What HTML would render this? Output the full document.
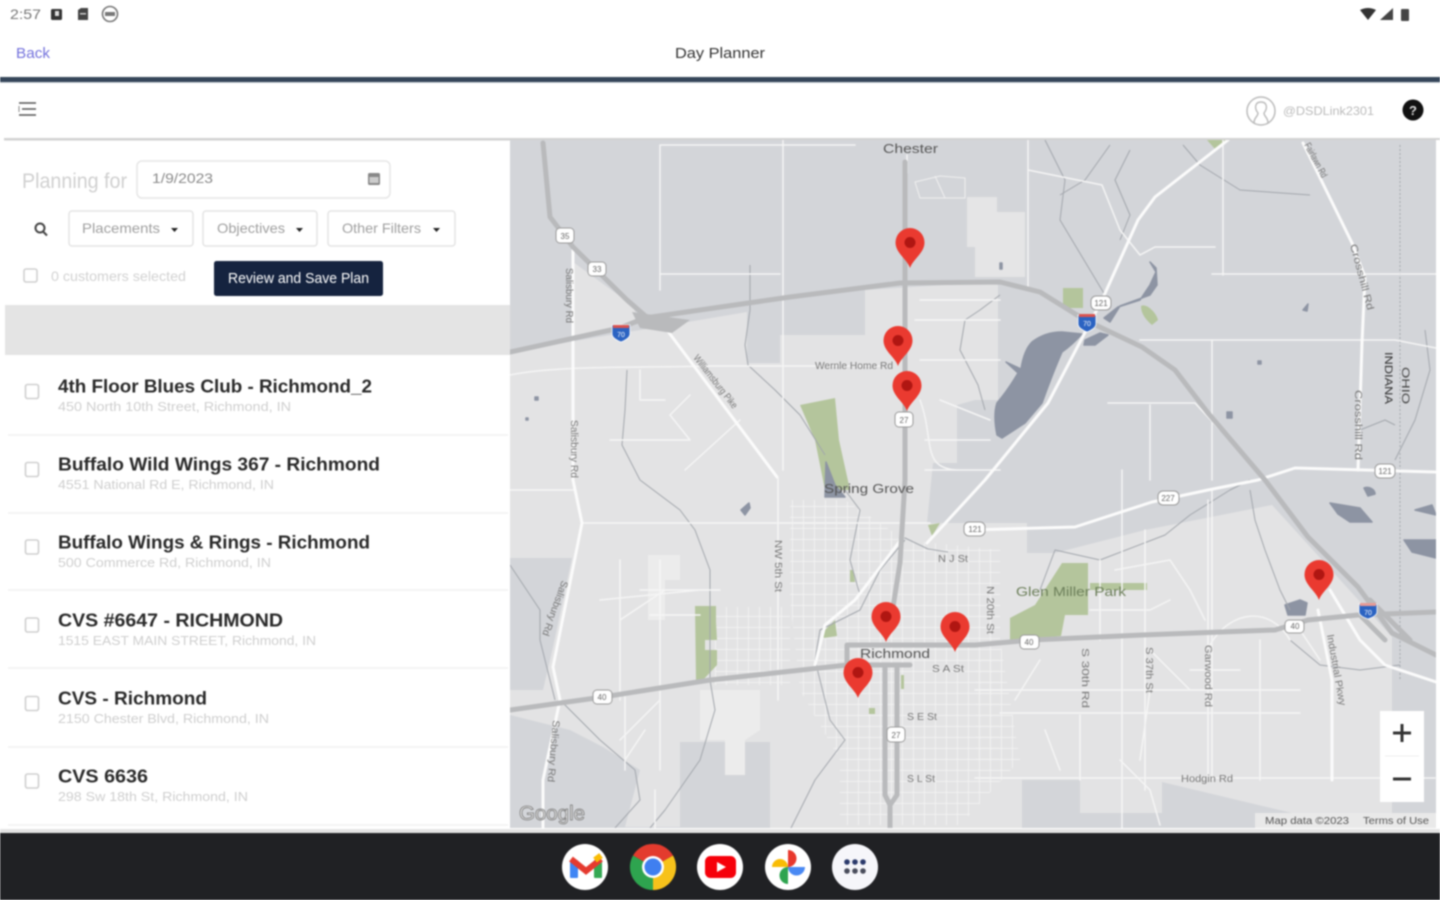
<!DOCTYPE html>
<html lang="en"><head><meta charset="utf-8"><title>Day Planner</title>
<style>
html,body{margin:0;padding:0;background:#fff;width:1440px;height:900px;overflow:hidden}
svg{display:block;position:absolute;left:0;top:0;filter:blur(.7px)}
text{font-family:"Liberation Sans",sans-serif}
.w{fill:none;stroke:#f5f5f5;stroke-width:1.5;stroke-linejoin:round;stroke-linecap:round}
.W{fill:none;stroke:#fbfbfb;stroke-width:3;stroke-linejoin:round;stroke-linecap:round}
.t{fill:none;stroke:#f0f0f0;stroke-width:1;stroke-linejoin:round}
.h{fill:none;stroke:#b9babc;stroke-width:5;stroke-linejoin:round;stroke-linecap:round}
.r{fill:none;stroke:#a2a6ac;stroke-width:1;stroke-linejoin:round}
.l{font-size:10px;fill:#777}
.n{font-size:18px;font-weight:bold;fill:#2a2a2a}
.a{font-size:13px;fill:#cfcfcf}
.f{font-size:14px;fill:#a0a0a0}
.sh{fill:#fff;stroke:#999;stroke-width:1}
.st{font-size:8px;fill:#666;text-anchor:middle}
</style></head><body>
<svg width="1440" height="900" viewBox="0 0 1440 900" xmlns="http://www.w3.org/2000/svg">
<defs>
<clipPath id="mc"><rect x="510" y="140" width="926" height="688"/></clipPath>
<pattern id="g" width="11" height="11" patternUnits="userSpaceOnUse"><path d="M0 0H11M0 0V11" stroke="#f5f5f5" stroke-width="1.5" fill="none"/></pattern>
<g id="pin"><path d="M0 0C-3-9-14.500-15-14.500-25.500A14.500 14.500 0 0 1 14.500-25.500C14.500-15 3-9 0 0Z" fill="#ea3a30"/><circle cy="-25.500" r="5.500" fill="#b01612"/></g>
</defs>
<rect width="1440" height="900" fill="#fff"/>

<!-- status bar -->
<text x="10" y="19" font-size="14" fill="#777" textLength="31" lengthAdjust="spacingAndGlyphs">2:57</text>
<rect x="51" y="9" width="11" height="11" rx="1.500" fill="#333"/><rect x="55" y="11" width="4" height="5" fill="#ddd"/>
<path d="M78 10l3-2h7v12H78Z" fill="#444"/><rect x="80" y="13" width="6" height="1.500" fill="#ccc"/>
<circle cx="110" cy="14" r="7.500" fill="none" stroke="#777" stroke-width="1.600"/><rect x="105" y="12" width="10" height="4" fill="#777"/>
<path d="M1360 10Q1368 6 1376 10L1368 20Z" fill="#333"/><path d="M1380 20L1393 8V20Z" fill="#444"/><rect x="1401" y="9" width="8" height="12" rx="1" fill="#444"/>

<!-- app title -->
<text x="16" y="58" font-size="15" fill="#7472dc" textLength="34" lengthAdjust="spacingAndGlyphs">Back</text>
<text x="675" y="58" font-size="15" fill="#333" textLength="90" lengthAdjust="spacingAndGlyphs">Day Planner</text>
<rect x="0" y="77" width="1440" height="5" fill="#35465a"/>
<rect x="0" y="82" width="1440" height="1" fill="#c8ced4"/>

<!-- nav -->
<path d="M19 103H36M22 109H36M19 115H36" stroke="#555" stroke-width="1.600" fill="none"/>
<path d="M19 106V112" stroke="#888" stroke-width="1"/>
<circle cx="1261" cy="111" r="14" fill="none" stroke="#bbb" stroke-width="1.500"/>
<path d="M1254 123C1254 117 1258 117 1258 113C1254 108 1255 102 1261 102C1267 102 1268 108 1264 113C1264 117 1268 117 1268 123" fill="none" stroke="#bbb" stroke-width="1.400"/>
<text x="1283" y="115" font-size="12" fill="#bbb" textLength="91" lengthAdjust="spacingAndGlyphs">@DSDLink2301</text>
<circle cx="1413" cy="110" r="10.500" fill="#111"/><text x="1413" y="115" font-size="13" font-weight="bold" fill="#ddd" text-anchor="middle">?</text>
<rect x="4" y="138" width="1436" height="2.500" fill="#d2d2d2"/>

<!-- sidebar top -->
<text x="22" y="188" font-size="21" fill="#d0d0d0" textLength="105" lengthAdjust="spacingAndGlyphs">Planning for</text>
<rect x="137" y="161" width="253" height="37" rx="5" fill="#fff" stroke="#e6e6e6" stroke-width="1.500"/>
<text x="152" y="183" font-size="14" fill="#8a8a8a" textLength="61" lengthAdjust="spacingAndGlyphs">1/9/2023</text>
<rect x="368" y="173" width="12" height="12" rx="1.500" fill="#888"/><rect x="369.500" y="177" width="9" height="6" fill="#ccc"/>
<circle cx="40" cy="228" r="4.500" fill="none" stroke="#444" stroke-width="2"/><path d="M43.500 232L47 235.500" stroke="#444" stroke-width="2"/>
<g fill="#fff" stroke="#e4e4e4" stroke-width="1.500">
<rect x="69" y="211" width="124" height="35" rx="3"/><rect x="203" y="211" width="114" height="35" rx="3"/><rect x="328" y="211" width="127" height="35" rx="3"/>
</g>
<text class="f" x="82" y="233" textLength="78" lengthAdjust="spacingAndGlyphs">Placements</text>
<text class="f" x="217" y="233" textLength="68" lengthAdjust="spacingAndGlyphs">Objectives</text>
<text class="f" x="342" y="233" textLength="79" lengthAdjust="spacingAndGlyphs">Other Filters</text>
<g fill="#222"><path d="M171 228h7l-3.500 4Z"/><path d="M296 228h7l-3.500 4Z"/><path d="M433 228h7l-3.500 4Z"/></g>
<rect x="24" y="269" width="13" height="13" rx="2" fill="#fff" stroke="#d0d0d0" stroke-width="1.600"/>
<text x="51" y="281" font-size="14" fill="#d2d2d2" textLength="135" lengthAdjust="spacingAndGlyphs">0 customers selected</text>
<rect x="214" y="261" width="169" height="35" rx="2.500" fill="#15233f"/>
<text x="228" y="283" font-size="15" fill="#fff" textLength="141" lengthAdjust="spacingAndGlyphs">Review and Save Plan</text>
<rect x="5" y="305" width="505" height="50" fill="#e4e4e4"/>

<!-- list -->
<g fill="#fff" stroke="#cfcfcf" stroke-width="1.600">
<rect x="25.500" y="384.500" width="13" height="14" rx="2"/><rect x="25.500" y="462.500" width="13" height="14" rx="2"/><rect x="25.500" y="540" width="13" height="14" rx="2"/><rect x="25.500" y="618" width="13" height="14" rx="2"/><rect x="25.500" y="696.500" width="13" height="14" rx="2"/><rect x="25.500" y="774" width="13" height="14" rx="2"/>
</g>
<text class="n" x="58" y="392.500" textLength="314" lengthAdjust="spacingAndGlyphs">4th Floor Blues Club - Richmond_2</text>
<text class="a" x="58" y="411" textLength="233" lengthAdjust="spacingAndGlyphs">450 North 10th Street, Richmond, IN</text>
<text class="n" x="58" y="470.500" textLength="322" lengthAdjust="spacingAndGlyphs">Buffalo Wild Wings 367 - Richmond</text>
<text class="a" x="58" y="489" textLength="216" lengthAdjust="spacingAndGlyphs">4551 National Rd E, Richmond, IN</text>
<text class="n" x="58" y="548.500" textLength="312" lengthAdjust="spacingAndGlyphs">Buffalo Wings &amp; Rings - Richmond</text>
<text class="a" x="58" y="567" textLength="213" lengthAdjust="spacingAndGlyphs">500 Commerce Rd, Richmond, IN</text>
<text class="n" x="58" y="626.500" textLength="225" lengthAdjust="spacingAndGlyphs">CVS #6647 - RICHMOND</text>
<text class="a" x="58" y="645" textLength="258" lengthAdjust="spacingAndGlyphs">1515 EAST MAIN STREET, Richmond, IN</text>
<text class="n" x="58" y="704.500" textLength="149" lengthAdjust="spacingAndGlyphs">CVS - Richmond</text>
<text class="a" x="58" y="723" textLength="211" lengthAdjust="spacingAndGlyphs">2150 Chester Blvd, Richmond, IN</text>
<text class="n" x="58" y="782.500" textLength="90" lengthAdjust="spacingAndGlyphs">CVS 6636</text>
<text class="a" x="58" y="801" textLength="190" lengthAdjust="spacingAndGlyphs">298 Sw 18th St, Richmond, IN</text>
<path d="M8 435H508M8 513H508M8 590H508M8 668H508M8 747H508M8 825H508" stroke="#f1f1f1" stroke-width="1.500"/>

<!-- MAP -->
<g clip-path="url(#mc)">
<rect x="510" y="140" width="926" height="688" fill="#d3d5d9"/>
<!-- urban land -->
<path d="M510 352L747 312V363H780V335H865V290L975 283H998V400H975L957 405V463H933L927 523H1027V553H1055L1145 530L1272 505L1392 637V813H1292L1162 782V813H1080V780H1022V828H770V742H680V827H625L640 770L603 747L570 730L510 715V690H543L553 647L572 558H510Z" fill="#e3e3e4"/>
<path d="M573 262L632 305L640 322L573 336Z" fill="#e3e3e4"/>
<path d="M967 197H997V212H1025V277H975V247H967Z" fill="#e5e5e6"/>
<!-- lighter blocks -->
<path d="M648 555H680V580H665V620H648Z" fill="#ececec"/>
<path d="M700 690H760V730L745 740V775H725V740H700Z" fill="#ececec"/>
<!-- city grid -->
<path d="M845 500L905 540L1000 550V640L1020 760L960 825H840L840 760L800 690L790 600V500Z" fill="url(#g)"/>
<path d="M715 607H790V685H715Z" fill="url(#g)"/>
<path d="M975 660H1000V760H975Z" fill="url(#g)"/>
<!-- parks -->
<g fill="#b4c59c">
<path d="M800 405L835 398L839 440L850 490H825L815 440Z"/>
<path d="M695 606H716V622L717 640H705V650H717V665L703 680H696Z"/>
<path d="M1010 640V618L1035 605L1062 563H1088V615H1065L1061 636L1015 640Z"/>
<path d="M1090 583H1147V590H1090Z"/>
<rect x="1063" y="288" width="20" height="20"/>
<path d="M1141 306C1146 303 1156 312 1158 320L1152 325C1146 320 1141 314 1141 306Z"/>
<path d="M822 633L835 620L837 636L824 638Z"/>
<path d="M850 570L853 570L855 582L850 582Z"/>
<path d="M928 525L940 523L932 536Z"/>
<rect x="901" y="675" width="3" height="14"/>
<rect x="869" y="708" width="6" height="6"/>
<path d="M1207 140L1228 140L1215 149Z"/>
</g>
<!-- water -->
<g fill="#8d94a3" stroke="#8d94a3" stroke-width="1.500" stroke-linejoin="round">
<path d="M997 435Q993 415 997 403Q1008 390 1018 373L1006 362L1021 369Q1024 350 1032 342Q1045 332 1062 332L1082 334Q1072 345 1062 352Q1052 375 1042 403L1025 423L1002 438Z"/>
<path d="M1085 340L1100 333L1108 335L1095 345L1084 345Z"/>
<path d="M1104 318L1118 307L1140 300L1150 285L1156 272L1150 262L1156 268L1157 285L1150 295L1120 306L1110 322Z"/>
<path d="M1285 605L1300 600L1307 603L1305 615H1288Z"/>
<path d="M1330 503L1360 508L1372 522L1350 522L1338 514Z"/>
<path d="M1404 540H1436V558L1412 552Z"/>
<path d="M1364 488C1370 486 1375 490 1375 494L1368 496Z"/>
<path d="M1415 510L1432 505L1436 515Z"/>
<path d="M826 462L835 485L845 497L825 497Z"/>
<path d="M741 510L749 503L750 508L745 515Z"/>
<path d="M1303 310L1308 304L1307 311Z"/>
<rect x="1227" y="412" width="5" height="6"/><rect x="1000" y="263" width="2" height="6"/>
<rect x="1258" y="361" width="3" height="3"/><rect x="535" y="397" width="3" height="3"/><rect x="526" y="418" width="2" height="2"/>
</g>
<!-- rivers -->
<g>
<path class="r" d="M1000 295L980 310L965 320L960 350L978 385L985 410"/>
<path class="r" d="M750 265L750 310L745 345L748 365L775 390L800 415L825 455"/>
<path class="r" d="M627 370L625 410L622 445L640 480"/>
<path class="r" d="M640 480L680 510L695 530L710 570V680L715 710L700 760L665 810L650 828"/>
<path class="r" d="M510 565L540 610L540 640L555 700"/>
<path class="r" d="M560 700L600 740L635 770L640 800L615 828"/>
<path class="r" d="M1045 140L1065 180L1060 220L1090 270L1105 295"/>
<path class="r" d="M1110 145L1085 180L1060 195"/>
<path class="r" d="M1130 150L1115 180L1130 215L1120 240"/>
<path class="r" d="M1183 145L1200 165L1240 190L1310 195"/>
<path class="r" d="M1250 480L1230 490L1190 515L1165 535L1100 560L1055 550L1040 590"/>
<path class="r" d="M903 537L928 549L948 552"/>
<path class="r" d="M905 540L880 570L860 610L820 630L815 660L830 720L845 740L815 780L790 830"/>
<path class="r" d="M1250 490L1255 520L1265 550L1280 590L1290 610"/>
<path class="r" d="M1290 640L1320 665L1360 670L1400 665"/>
<path class="r" d="M1425 330L1430 370L1415 420L1395 460"/>
<path class="r" d="M1360 430L1385 420L1395 425"/>
<path class="r" d="M845 490L860 510L850 560L860 595"/>
</g>
<path d="M1400 145V680" stroke="#a4a8ae" stroke-width="1" stroke-dasharray="2 2" fill="none"/>
<!-- minor streets -->
<g>
<path class="w" d="M661 145H855M660 145V290M660 274H780M783 140V470M1028 140V290M1028 170L1102 185L1120 230L1140 255L1155 247H1215"/>
<path class="w" d="M1223 275V130M1212 274H1436M1140 340H1395L1436 348M1212 340V480M1108 403H1195L1220 430M1150 405V480M1122 470V830M1212 490V780"/>
<path class="w" d="M510 375C560 365 640 368 710 366H880M640 370V400M640 400H665M690 395L670 415L690 440M690 440L610 440M685 470L740 420"/>
<path class="w" d="M510 490H575M582 523H930M620 560V700M650 615H700M660 560V770M600 600L700 590M640 590H720M625 695V770M645 730L625 760M655 790V830M660 700L620 740M620 620L665 590"/>
<path class="w" d="M920 300H1000M915 320H1000M920 360H1000M940 400L990 420M925 440H990M925 470H1000M920 400C935 440 920 470 960 470"/>
<path class="w" d="M1100 560V640M1145 530V790M1208 500V780M1260 640V780M1000 713H1300M975 778H1435M975 690H1300M1080 715V780M1150 690L1140 760"/>
<path class="w" d="M1090 610H1150L1170 600M1115 570L1170 560L1190 590L1205 620M1150 650L1190 690M1190 670H1240M1210 645C1230 610 1270 605 1290 640M1300 630L1320 660M1040 660L1015 700M1045 730L1060 770M1120 760L1150 790L1160 825"/>
</g>
<!-- major white roads -->
<path class="W" d="M667 330L777 477"/>
<path class="W" stroke-width="2.500" d="M1228 140L1155 197L1138 220L1102 300L1048 403L985 480L927 543"/>
<path class="W" d="M1435 472L1295 468L1258 480L1208 490L1152 502L1075 527L970 530"/>
<path class="W" d="M1303 143L1352 243L1365 277L1362 343L1358 470"/>
<path class="W" stroke-width="2.500" d="M573 247V480L582 523L553 667L560 700L543 780V827"/>
<path class="w" stroke-width="2.200" d="M778 477V700"/>
<path class="W" stroke-width="2.200" d="M1330 590L1360 640L1385 665L1436 682"/>
<path class="W" stroke-width="2" d="M1318 610L1332 680V780"/>
<path class="W" stroke-width="2" d="M903 537L878 570L855 600L825 625L815 665"/>
<path class="w" d="M907 155V173"/>
<path class="t" d="M915 182L940 176L965 178V198L920 198ZM935 176L945 198"/>
<!-- highways -->
<path class="h" stroke-width="4" d="M510 352L620 328L645 318L700 310L790 297L900 283L1000 282L1040 292L1085 320L1142 347L1175 370L1208 413L1265 480L1308 537L1358 587L1392 633L1436 655"/>
<path class="h" stroke-width="3" d="M543 143L550 217L573 247L627 300L650 320"/>
<path d="M632 312L690 320L672 333L640 328Z" fill="#b9babc"/>
<path class="h" stroke-width="3.500" d="M905 162V480L900 563L893 607"/>
<path class="h" stroke-width="3.500" d="M510 710L603 697L710 680L847 665H910"/>
<path class="h" stroke-width="4" d="M847 665V645H975L1032 640L1142 635L1275 630L1308 620L1358 615L1436 612"/>
<path class="h" stroke-width="3" d="M885 665V795L890 805L897 795V665M890 805V828"/>
<path class="h" stroke-width="1.500" d="M1360 615L1385 640M1370 600L1410 640"/>
<!-- shields -->
<g>
<rect class="sh" x="556" y="228" width="18" height="15" rx="4"/><text class="st" x="565" y="239">35</text>
<rect class="sh" x="588" y="262" width="18" height="14" rx="4"/><text class="st" x="597" y="272">33</text>
<rect class="sh" x="1091" y="296" width="20" height="14" rx="5"/><text class="st" x="1101" y="306">121</text>
<rect class="sh" x="1375" y="464" width="20" height="14" rx="5"/><text class="st" x="1385" y="474">121</text>
<rect class="sh" x="1158" y="491" width="21" height="14" rx="5"/><text class="st" x="1168" y="501">227</text>
<rect class="sh" x="964" y="522" width="21" height="14" rx="5"/><text class="st" x="975" y="532">121</text>
<rect class="sh" x="895" y="412" width="18" height="15" rx="4"/><text class="st" x="904" y="423">27</text>
<rect class="sh" x="887" y="727" width="18" height="15" rx="4"/><text class="st" x="896" y="738">27</text>
<rect class="sh" x="593" y="690" width="19" height="14" rx="4"/><text class="st" x="602" y="700">40</text>
<rect class="sh" x="1020" y="635" width="19" height="14" rx="4"/><text class="st" x="1029" y="645">40</text>
<rect class="sh" x="1285" y="620" width="19" height="13" rx="4"/><text class="st" x="1295" y="629">40</text>
</g>
<g>
<path d="M612 325H630V334C630 338 624 341 621 342C618 341 612 338 612 334Z" fill="#2b63c2" stroke="#fff" stroke-width=".8"/><rect x="613" y="325" width="16" height="3" fill="#d9534f"/><text x="621" y="337" font-size="7" fill="#fff" text-anchor="middle">70</text>
<path d="M1078 315H1096V324C1096 328 1090 331 1087 332C1084 331 1078 328 1078 324Z" fill="#2b63c2" stroke="#fff" stroke-width=".8"/><rect x="1079" y="314" width="16" height="3" fill="#d9534f"/><text x="1087" y="326" font-size="7" fill="#fff" text-anchor="middle">70</text>
<path d="M1359 604H1377V612C1377 616 1371 618 1368 619C1365 618 1359 616 1359 612Z" fill="#2b63c2" stroke="#fff" stroke-width=".8"/><rect x="1360" y="603" width="16" height="3" fill="#e79a95"/><text x="1368" y="615" font-size="7" fill="#fff" text-anchor="middle">70</text>
</g>
<!-- labels -->
<text x="883" y="153" font-size="13" fill="#555" textLength="55" lengthAdjust="spacingAndGlyphs">Chester</text>
<text x="824" y="493" font-size="13" fill="#555" textLength="90" lengthAdjust="spacingAndGlyphs">Spring Grove</text>
<text x="860" y="658" font-size="13" fill="#555" textLength="70" lengthAdjust="spacingAndGlyphs">Richmond</text>
<text x="1016" y="596" font-size="13" fill="#6c7f5a" textLength="110" lengthAdjust="spacingAndGlyphs">Glen Miller Park</text>
<text class="l" x="815" y="369" textLength="78" lengthAdjust="spacingAndGlyphs">Wernle Home Rd</text>
<text class="l" x="932" y="672" textLength="32" lengthAdjust="spacingAndGlyphs">S A St</text>
<text class="l" x="907" y="720" textLength="30" lengthAdjust="spacingAndGlyphs">S E St</text>
<text class="l" x="907" y="782" textLength="28" lengthAdjust="spacingAndGlyphs">S L St</text>
<text class="l" x="938" y="562" textLength="30" lengthAdjust="spacingAndGlyphs">N J St</text>
<text class="l" x="1181" y="782" textLength="52" lengthAdjust="spacingAndGlyphs">Hodgin Rd</text>
<text class="l" transform="translate(566 268) rotate(90)" textLength="55" lengthAdjust="spacingAndGlyphs">Salisbury Rd</text>
<text class="l" transform="translate(571 420) rotate(90)" textLength="58" lengthAdjust="spacingAndGlyphs">Salisbury Rd</text>
<text class="l" transform="translate(562 580) rotate(110)" textLength="58" lengthAdjust="spacingAndGlyphs">Salisbury Rd</text>
<text class="l" transform="translate(553 720) rotate(95)" textLength="62" lengthAdjust="spacingAndGlyphs">Salisbury Rd</text>
<text class="l" transform="translate(693 358) rotate(52)" textLength="65" lengthAdjust="spacingAndGlyphs">Williamsburg Pike</text>
<text class="l" transform="translate(775 540) rotate(90)" textLength="52" lengthAdjust="spacingAndGlyphs">NW 5th St</text>
<text class="l" transform="translate(987 586) rotate(90)" textLength="48" lengthAdjust="spacingAndGlyphs">N 20th St</text>
<text class="l" transform="translate(1082 648) rotate(90)" textLength="60" lengthAdjust="spacingAndGlyphs">S 30th Rd</text>
<text class="l" transform="translate(1146 647) rotate(90)" textLength="46" lengthAdjust="spacingAndGlyphs">S 37th St</text>
<text class="l" transform="translate(1205 645) rotate(90)" textLength="62" lengthAdjust="spacingAndGlyphs">Garwood Rd</text>
<text class="l" transform="translate(1327 635) rotate(80)" textLength="72" lengthAdjust="spacingAndGlyphs">Industrial Pkwy</text>
<text class="l" transform="translate(1304 145) rotate(62)" textLength="38" lengthAdjust="spacingAndGlyphs">Fairlawn Rd</text>
<text class="l" transform="translate(1350 245) rotate(75)" textLength="68" lengthAdjust="spacingAndGlyphs">Crosshill Rd</text>
<text class="l" transform="translate(1355 390) rotate(90)" textLength="70" lengthAdjust="spacingAndGlyphs">Crosshill Rd</text>
<text transform="translate(1385 352) rotate(90)" font-size="11" fill="#333" textLength="52" lengthAdjust="spacingAndGlyphs">INDIANA</text>
<text transform="translate(1402 367) rotate(90)" font-size="11" fill="#444" textLength="37" lengthAdjust="spacingAndGlyphs">OHIO</text>
<!-- pins -->
<use href="#pin" x="910" y="268"/><use href="#pin" x="898" y="366"/><use href="#pin" x="907" y="411"/>
<use href="#pin" x="886" y="642"/><use href="#pin" x="955" y="652"/><use href="#pin" x="858" y="698"/><use href="#pin" x="1319" y="600"/>
<!-- google / attribution -->
<text x="519" y="820" font-size="20" fill="#f0f0f0" stroke="#777" stroke-width=".8" textLength="66" lengthAdjust="spacingAndGlyphs">Google</text>
<rect x="1255" y="813" width="181" height="15" fill="#e9e9e9"/>
<text x="1265" y="824" font-size="10" fill="#555" textLength="84" lengthAdjust="spacingAndGlyphs">Map data ©2023</text>
<text x="1363" y="824" font-size="10" fill="#555" textLength="66" lengthAdjust="spacingAndGlyphs">Terms of Use</text>
<!-- zoom -->
<rect x="1380" y="711" width="44" height="91" fill="#fff"/>
<path d="M1385 756H1419" stroke="#eee" stroke-width="1"/>
<path d="M1393 733H1411M1402 724V742M1393 779H1411" stroke="#333" stroke-width="3" fill="none"/>
</g>
<rect x="1436" y="140" width="4" height="693" fill="#fff"/>

<!-- dock -->
<rect x="0" y="829" width="1440" height="4" fill="#e4e4e4"/>
<rect x="0" y="833" width="1440" height="67" fill="#202124"/>
<circle cx="585" cy="867" r="23" fill="#fff"/><circle cx="720" cy="867" r="23" fill="#fff"/><circle cx="788" cy="867" r="23" fill="#fff"/><circle cx="855" cy="867" r="23" fill="#f6f6fa"/>
<!-- gmail -->
<rect x="570" y="860" width="8" height="18" rx="1" fill="#3f85f4"/><rect x="594" y="860" width="8" height="18" rx="1" fill="#34a853"/>
<path d="M571 859L586 871L601 859" fill="none" stroke="#e53a2f" stroke-width="6"/><path d="M595 860L601 855.500" stroke="#f9bc05" stroke-width="6"/>
<!-- chrome -->
<path d="M653 867L633 855.500A23 23 0 0 1 673 855.500Z" fill="#e33b2e"/>
<path d="M653 867L633 855.500A23 23 0 0 0 653 890Z" fill="#2ea44f"/>
<path d="M653 867L673 855.500A23 23 0 0 1 653 890Z" fill="#f7c21b"/>
<circle cx="653" cy="867" r="11" fill="#fff"/><circle cx="653" cy="867" r="8.500" fill="#3f7ff0"/>
<!-- youtube -->
<rect x="705" y="856" width="31" height="22" rx="5.500" fill="#f6000a"/><path d="M717 862L726 867L717 872Z" fill="#fff"/>
<!-- photos -->
<path d="M772 867A8 8 0 0 1 788 867Z" fill="#f9bc05"/>
<path d="M788 867V850A8.500 8.500 0 0 1 788 867Z" fill="#e8382c"/>
<path d="M788 867H805A8.500 8.500 0 0 1 788 867Z" fill="#4a89f3"/>
<path d="M788 867V884A8.500 8.500 0 0 1 788 867Z" fill="#2ea44f"/>
<!-- apps -->
<g fill="#2b3a6b"><circle cx="847" cy="862" r="2.800"/><circle cx="855" cy="862" r="2.800"/><circle cx="863" cy="862" r="2.800"/></g>
<g fill="#4a4d5c"><circle cx="847" cy="871" r="2.800"/><circle cx="855" cy="871" r="2.800"/><circle cx="863" cy="871" r="2.800"/></g>
</svg>
</body></html>
